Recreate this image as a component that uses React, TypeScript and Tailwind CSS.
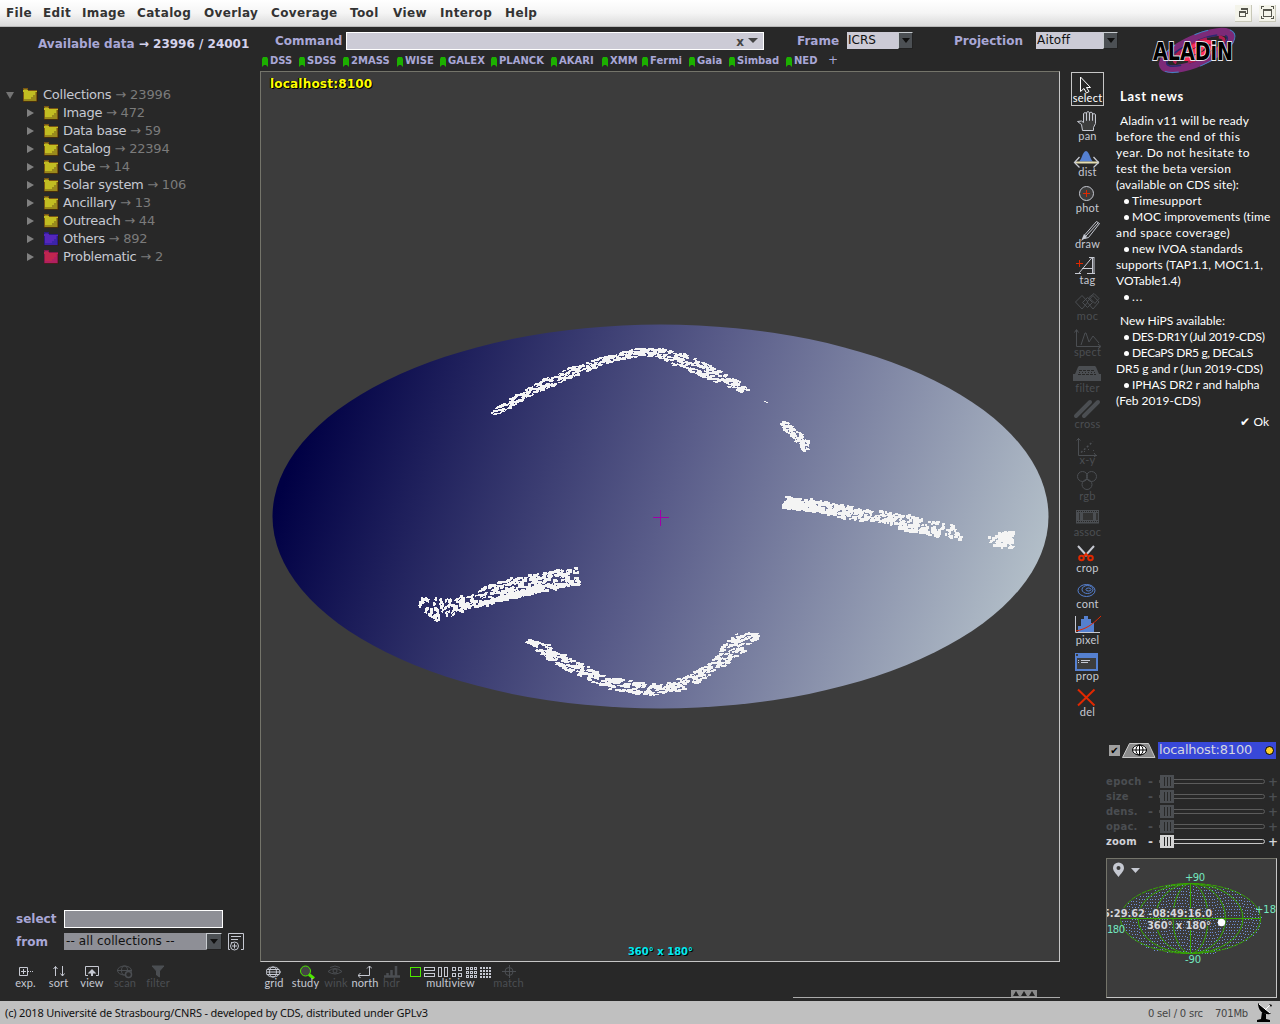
import React from "react";

type IconDef = { label: string; icon: React.ReactNode; off?: boolean };

const menus: [string, string][] = [
  ["File", "w-[37px]"], ["Edit", "w-[39px]"], ["Image", "w-[55px]"], ["Catalog", "w-[67px]"], ["Overlay", "w-[67px]"],
  ["Coverage", "w-[79px]"], ["Tool", "w-[43px]"], ["View", "w-[47px]"], ["Interop", "w-[65px]"], ["Help", "w-[40px]"],
];

const bookmarks: [string, string][] = [
  ["DSS", "w-[37px]"], ["SDSS", "w-[44px]"], ["2MASS", "w-[54px]"], ["WISE", "w-[43px]"], ["GALEX", "w-[51px]"],
  ["PLANCK", "w-[60px]"], ["AKARI", "w-[51px]"], ["XMM", "w-[40px]"], ["Fermi", "w-[47px]"], ["Gaia", "w-[40px]"],
  ["Simbad", "w-[57px]"], ["NED", "w-[42px]"],
];

const tree: [string, string, string][] = [
  ["Image", "472", "y"], ["Data base", "59", "y"], ["Catalog", "22394", "y"], ["Cube", "14", "y"],
  ["Solar system", "106", "y"], ["Ancillary", "13", "y"], ["Outreach", "44", "y"], ["Others", "892", "b"], ["Problematic", "2", "r"],
];

const folderColors: Record<string, [string, string, string]> = {
  y: ["#c2bd22", "#9a8a1c", "#7a5512"],
  b: ["#5526bb", "#3c24a8", "#2a1a86"],
  r: ["#c0264f", "#b02060", "#86184c"],
};

function Folder({ kind }: { kind: string }) {
  const [a, b, c] = folderColors[kind];
  return (
    <svg width="16" height="14" viewBox="0 0 16 14" shapeRendering="crispEdges">
      <path d="M1.500 .5h4v1.500h9v11h-13z" fill={b} stroke={c} />
      <path d="M1 2h5v1h9v1H1z" fill={a} />
      <path d="M2 4h11v3h-2v2H9v2H2z" fill={a} />
      <path d="M1 13.500h14.500V3" fill="none" stroke="#33200a" strokeOpacity=".7" />
    </svg>
  );
}

function random(seed: number) {
  let s = seed;
  return () => {
    s = (s * 1664525 + 1013904223) >>> 0;
    return s / 4294967296;
  };
}

/* Bands of sky cells: x, y, thickness and fill density at each node */
type BandNode = [number, number, number, number];
const bands: { nodes: BandNode[]; lean: number; cw: number; ch: number }[] = [
  { nodes: [[493, 414, 7, 1.2], [505, 407, 9, 0.9], [520, 398, 10, 0.85], [535, 390, 10, 1.2], [552, 381, 12, 1.1], [580, 369, 11, 1], [610, 359, 9, 0.9], [640, 352, 9, 1], [660, 353, 12, 1.1], [690, 363, 16, 0.95], [715, 375, 14, 0.85], [747, 391, 10, 1]], lean: 0.4, cw: 4.5, ch: 1.8 },
  { nodes: [[783, 423, 9, 0.9], [796, 435, 10, 1.1], [809, 449, 11, 1.1]], lean: 0.4, cw: 4, ch: 2.2 },
  { nodes: [[784, 502, 12, 2.8], [820, 507, 13, 2.3], [838, 511, 15, 1.4], [860, 515, 13, 1.1], [885, 517, 12, 1.1], [905, 522, 17, 1.3], [920, 527, 17, 1.2], [940, 530, 15, 0.6], [963, 533, 15, 0.55]], lean: 0.2, cw: 3, ch: 3 },
  { nodes: [[989, 541, 11, 0.8], [999, 540, 14, 1.1], [1003, 540, 16, 3], [1014, 540, 17, 3]], lean: 0.2, cw: 3.2, ch: 3.2 },
  { nodes: [[419, 602, 12, 0.5], [430, 607, 21, 0.6], [443, 611, 25, 0.55], [453, 604, 16, 0.4]], lean: 0.9, cw: 2.6, ch: 3.4 },
  { nodes: [[454, 608, 7, 1.7], [462, 604, 18, 1.3], [473, 603, 13, 1.1], [480, 599, 20, 0.6], [490, 595, 20, 0.95], [515, 588, 21, 1.2], [550, 581, 20, 1.1], [579, 576, 19, 0.9]], lean: 0.3, cw: 3.2, ch: 2.6 },
  { nodes: [[479, 605, 4, 1.4], [520, 594, 8, 2.2], [550, 587, 7, 2], [579, 584, 3, 1.5]], lean: 0.5, cw: 4, ch: 2 },
  { nodes: [[529, 641, 5, 0.9], [545, 650, 15, 1.3], [558, 658, 14, 0.95], [575, 667, 14, 1.05], [610, 683, 13, 1], [650, 690, 13, 1.1], [685, 684, 13, 0.9], [715, 666, 13, 0.9], [733, 650, 20, 1], [743, 640, 20, 1.1], [758, 636, 6, 0.9]], lean: 0.3, cw: 4.5, ch: 2.1 },
];

function skyCells() {
  const rnd = random(77);
  const out: string[] = [];
  for (const band of bands) {
    for (let i = 0; i + 1 < band.nodes.length; i++) {
      const [x0, y0, t0, d0] = band.nodes[i];
      const [x1, y1, t1, d1] = band.nodes[i + 1];
      const len = Math.hypot(x1 - x0, y1 - y0);
      const nx = -(y1 - y0) / len;
      const ny = (x1 - x0) / len;
      const area = len * ((t0 + t1) / 2);
      const n = Math.round((area * (d0 + d1) * 0.6) / (band.cw * band.ch));
      for (let k = 0; k < n; k++) {
        const u = rnd();
        const v = rnd() - 0.5;
        const t = t0 + (t1 - t0) * u - 1.5;
        const w = band.cw * (0.6 + rnd() * 0.7);
        const h = band.ch * (0.7 + rnd() * 0.5);
        const slope = ((y1 - y0) / len) * band.lean * w;
        const x = x0 + (x1 - x0) * u + nx * v * t - w / 2;
        const y = y0 + (y1 - y0) * u + ny * v * t - (h + slope) / 2;
        out.push(`M${x.toFixed(1)} ${y.toFixed(1)}l${w.toFixed(1)} ${slope.toFixed(1)}l-.6 ${h.toFixed(1)}l-${w.toFixed(1)} ${(-slope).toFixed(1)}z`);
      }
    }
  }
  return out.join("");
}
const cells = skyCells();

function SkyView() {
  return (
    <svg className="block" width="798" height="889" viewBox="261 72 798 889">
      <defs>
        <linearGradient id="sky" gradientUnits="userSpaceOnUse" x1="315" y1="398" x2="1006" y2="650">
          <stop offset="0" stopColor="#000044" />
          <stop offset="0.5" stopColor="#5a5d8a" />
          <stop offset="1" stopColor="#b2bec8" />
        </linearGradient>
      </defs>
      <ellipse cx="660.5" cy="516.5" rx="388" ry="192" fill="url(#sky)" />
      <path d={cells} fill="#f4f4f4" shapeRendering="crispEdges" />
      <path d="M764 401h2v1h2v1h-2v-1h-2z" fill="#f4f4f4" />
      <path d="M652.500 517.500h16M660.500 509.500v16" stroke="#a000a8" shapeRendering="crispEdges" />
    </svg>
  );
}

const L = "#c6c9d2";
const G = "#4b4e52";

const tools: IconDef[] = [
  { label: "select", icon: <path d="M10.500 5v14.500l3.500-3 2.500 4.500 2.500-1.500-2.500-4h4z" stroke="#fff" fill="none" /> },
  { label: "pan", icon: <path d="M12.500 22.500h11v-3l2-4v-9l-1.500-1-1.500 1v6V5l-1.500-1-1.500 1v7.500-8L18 3.500l-1.500 1v8-7L15 4.500l-1.500 1v9l-2-1.500-4 .5 4 3z" stroke={L} fill="#3d3d3d" /> },
  { label: "dist", icon: <><path d="M8.500 17.500c3 0 4-10.500 7.500-10.500s4.500 10.500 7.500 10.500z" fill="#5580d0" /><path d="M5 18.500h24" stroke="#e4dcae" strokeWidth="2" /><path d="M9.500 13l-5 5.500 5 5M23.500 13l5 5.500-5 5" fill="none" stroke={L} strokeWidth="1.300" /></> },
  { label: "phot", icon: <><circle cx="16.500" cy="13.500" r="7" fill="#3d3d3d" stroke={L} /><path d="M13 13.500h7M16.500 10v7" stroke="#e02800" /></> },
  { label: "draw", icon: <><path d="M26.500 5.500l3 2-11 14-4 1 .5-4z" fill="none" stroke={L} /><path d="M28 7L16 20" stroke={L} /><path d="M14 18l3 3-6 4z" fill={L} /></> },
  { label: "tag", icon: <><path d="M5 21.500h6M17 21.500h8M9 21L22.500 5v16M24 5v16M12 16.500h11M19 5.500h5" stroke={L} fill="none" /><path d="M6 11.500h7M9.500 8v7" stroke="#e02800" /></> },
  { label: "moc", off: true, icon: <path d="M12 7.500l6 6.500-6 7-6.500-7zM23 7.500l6 6.500-6 7-6-7zM17.500 9.500l5 5-5 5-5-5zM24 5.500l5 5-4 5-6-6z" fill="none" stroke={G} /> },
  { label: "spect", off: true, icon: <path d="M6.500 6v16.500H30M4.500 8.500l2-3 2 3M28 20l3 2.500-3 2M11 21l4-12h1l3 9 4-6 6 7" fill="none" stroke={G} /> },
  { label: "filter", off: true, icon: <><path d="M9 6h16l1 1 3 7h2v7H3v-7h2l3-7z" fill={G} /><path d="M9 10.500h16M8 14.500h18" stroke="#282828" strokeDasharray="3 1" /><path d="M9 12.500h16" stroke="#282828" strokeDasharray="1 2" /></> },
  { label: "cross", off: true, icon: <path d="M6 20L20 6M14 20L28 6" stroke={G} strokeWidth="4" strokeLinecap="round" /> },
  { label: "x-y", off: true, icon: <><path d="M8.500 6v17.500H27M6.500 8.500l2-2 2 2M24 21l2 2.500-2 1.500" fill="none" stroke={G} /><path d="M11 20.500l12-11" stroke={G} strokeWidth="1.500" strokeDasharray="2 2" /><path d="M23 18.500h1M14 19.500h1M18 17.500h1" stroke={G} /></> },
  { label: "rgb", off: true, icon: <g fill="none" stroke={G}><circle cx="12.500" cy="8.500" r="5" /><circle cx="21.500" cy="8.500" r="5" /><circle cx="17" cy="16.500" r="5" /></g> },
  { label: "assoc", off: true, icon: <><path d="M6 6h23v13.500H6z" fill={G} /><path d="M7 7.500h22M7 17.500h22" stroke="#282828" strokeDasharray="1 1" /><path d="M9 9h1v7H9zM13 9h10v7H13zM26 9h2v7h-2z" fill="#333" /></> },
  { label: "crop", icon: <><path d="M8 6l9 10M24 6l-9 10" stroke={L} strokeWidth="2" /><g fill="none" stroke="#e02800" strokeWidth="2"><circle cx="11.500" cy="18" r="2.300" /><circle cx="20.500" cy="18" r="2.300" /><path d="M14 16l2-2 2 2" /></g></> },
  { label: "cont", icon: <g fill="none" stroke="#5580d0"><ellipse cx="16.500" cy="14.500" rx="8.500" ry="6" /><ellipse cx="17.500" cy="13.500" rx="5.500" ry="4" /><ellipse cx="18.500" cy="13.500" rx="2.500" ry="1.500" /></g> },
  { label: "pixel", icon: <><path d="M8 20v-6h3V7h3V4h4v3h3v4h3v9z" fill="#5580d0" /><path d="M5.500 4v16.500H30" fill="none" stroke={L} /><path d="M6 19c10-2 16-6 25-15" fill="none" stroke="#e02800" /></> },
  { label: "prop", icon: <><path d="M5 5h23v18H5z" fill="#5580d0" /><path d="M7 10h19v11H7zM6 6h2v2H6z" fill="#3d3d3d" /><path d="M8 12.500h1M11 12.500h9M8 14.500h1M11 14.500h7" stroke={L} /></> },
  { label: "del", icon: <path d="M8 5.500l16.500 16M24.500 5.500L8 21.500" stroke="#e02800" strokeWidth="2" /> },
];

const newsA: [string, string][] = [
  ["Aladin v11 will be ready", "tracking-[0.15px]"], ["before the end of this", "tracking-[0.5px]"], ["year. Do not hesitate to", "tracking-[0.42px]"],
  ["test the beta version", "tracking-[0.35px]"], ["(available on CDS site):", "tracking-[0.15px]"], ["• Timesupport", "tracking-[0.25px]"],
  ["• MOC improvements (time", "tracking-[0.1px]"], ["and space coverage)", "tracking-[0.45px]"], ["• new IVOA standards", "tracking-[0.18px]"],
  ["supports (TAP1.1, MOC1.1,", "tracking-[0.1px]"], ["VOTable1.4)", "tracking-[0px]"], ["• ...", "tracking-[0.9px]"],
];
const newsB: [string, string][] = [
  ["New HiPS available:", "tracking-[0.02px]"], ["• DES-DR1Y (Jul 2019-CDS)", "tracking-[-0.35px]"], ["• DECaPS DR5 g, DECaLS", "tracking-[-0.34px]"],
  ["DR5 g and r (Jun 2019-CDS)", "tracking-[-0.1px]"], ["• IPHAS DR2 r and halpha", "tracking-[-0.05px]"], ["(Feb 2019-CDS)", "tracking-[0px]"],
];

function News({ lines }: { lines: [string, string][] }) {
  return (
    <>
      {lines.map(([l, spacing], i) => (
        <p key={l} className={`${spacing} ${l.startsWith("•") ? "pl-2" : i === 0 ? "pl-1" : ""}`}>
          {l.startsWith("•") ? <><span className="mr-[3px] inline-block size-[5px] rounded-full bg-white align-[1px]" />{l.slice(2)}</> : l}
        </p>
      ))}
    </>
  );
}

function Logo() {
  return (
    <svg className="overflow-visible" width="86" height="42" viewBox="0 0 86 42">
      <g fill="none" transform="rotate(-24 45 20.500)">
        <ellipse cx="45" cy="20.500" rx="37" ry="12" stroke="#7c2a78" strokeWidth="8" />
        <ellipse cx="45" cy="20.500" rx="41" ry="15.500" stroke="#3d88c4" strokeWidth="1" strokeDasharray="14 22" />
        <ellipse cx="45" cy="20.500" rx="33" ry="9" stroke="#2a2a70" strokeWidth="1.500" strokeDasharray="20 8" />
        <ellipse cx="47" cy="21" rx="27" ry="8" stroke="#b01c50" strokeWidth="3" strokeDasharray="44 12" />
        <ellipse cx="45" cy="20.500" rx="17" ry="5.500" stroke="#ff2c58" strokeWidth="4" />
        <ellipse cx="45" cy="20.500" rx="8" ry="3" fill="#ff3858" />
      </g>
      <text x="1" y="30" textLength="80" lengthAdjust="spacingAndGlyphs" fontFamily="DejaVu Sans" fontWeight="700" fontSize="24" fill="#000" stroke="#e8e8ee" strokeWidth="1.800" paintOrder="stroke">ALADiN</text>
    </svg>
  );
}

function Drop({ small }: { small?: boolean }) {
  return (
    <span className={`flex ${small ? "w-4" : "w-[15px]"} h-full items-center justify-center border border-t-[#c8ccd0] border-l-[#c8ccd0] border-r-[#222] border-b-[#222] bg-[#4c5054]`}>
      <span className="border-x-[4px] border-t-[5px] border-x-transparent border-t-[#111]" />
    </span>
  );
}

const sliders = ["epoch", "size", "dens.", "opac.", "zoom"];

function miniGrid() {
  const pts: string[] = [];
  for (let j = -11; j <= 11; j++) {
    const y = j * 3;
    const half = 70 * Math.sqrt(1 - (y / 35.5) ** 2);
    const off = ((j + 12) % 3) * 0.8;
    for (let x = -half + off; x < half; x += 2.7) pts.push(`M${Math.round(84 + x)} ${Math.round(60 + y + Math.sin(x / 9) * 1.1)}h1v1h-1z`);
  }
  return pts.join("");
}
const dots = miniGrid();

function MiniMap() {
  return (
    <svg className="block" width="169" height="138" viewBox="0 0 169 138">
      <path d={dots} fill="#6f8fd8" shapeRendering="crispEdges" />
      <g fill="none" stroke="#36a800">
        <ellipse cx="83.500" cy="59.500" rx="70" ry="35" strokeDasharray="5 1" />
        <ellipse cx="83.500" cy="59.500" rx="52.500" ry="35" />
        <ellipse cx="83.500" cy="59.500" rx="35" ry="35" />
        <ellipse cx="83.500" cy="59.500" rx="17.500" ry="35" />
        <path d="M13.500 59.500h140M83.500 24.500v70" />
      </g>
      <path fillRule="evenodd" d="M6 9a5.500 5.500 0 0 1 11 0c0 3-3 5.500-5.500 9C9 14.500 6 12 6 9zm3.500 0a2 2 0 1 0 4 0a2 2 0 1 0-4 0z" fill="#c6c9d2" />
      <path d="M24 9h9l-4.500 5z" fill="#c6c9d2" />
      <g fontFamily="DejaVu Sans" fontSize="10" fill="#74e8c0">
        <text x="78" y="22" textLength="20">+90</text>
        <text x="78" y="104" textLength="16">-90</text>
        <text x="148" y="54" textLength="21">+18</text>
        <text x="0" y="74" textLength="18">180</text>
      </g>
      <g fontFamily="DejaVu Sans" fontSize="10" fontWeight="700" fill="#d4d6dc" stroke="#3c3c3c" strokeWidth="2" paintOrder="stroke">
        <text x="-4" y="58" textLength="109" lengthAdjust="spacingAndGlyphs">5:29.62 -08:49:16.0</text>
        <text x="40" y="70" textLength="64">360° x 180°</text>
      </g>
      <circle cx="114.500" cy="63.500" r="3.700" fill="#fff" />
    </svg>
  );
}

function Btn({ label, off, cls, children, w }: { label: string; off?: boolean; cls: string; children: React.ReactNode; w: number }) {
  return (
    <div className={`flex flex-col items-center ${cls} ${off ? "text-[#4b4e52]" : "text-[#c6c9d2]"}`}>
      <svg className="shrink-0" width={w} height="14" viewBox={`0 0 ${w} 14`} fill="none" stroke="currentColor">{children}</svg>
      <span className="-mt-[3px] font-['Lato'] text-[11px] leading-[13px] tracking-[0.15px] whitespace-nowrap">{label}</span>
    </div>
  );
}

export default function App() {
  return (
    <div className="flex h-[1024px] w-[1280px] flex-col overflow-hidden bg-[#282828] font-['DejaVu_Sans',sans-serif] text-[12px] text-[#c6c9d2]">
      <header className="flex h-[27px] shrink-0 items-center border-b border-[#b8b8b8] bg-linear-to-b from-white via-[#f5f5f5] to-[#dadada] pl-[6px] font-bold tracking-[0.35px] text-[#333]">
        {menus.map(([m, w]) => (
          <span key={m} className={`${w} shrink-0 leading-[25px] whitespace-nowrap`}>{m}</span>
        ))}
        <div className="mr-1 ml-auto flex gap-[7px]">
          <span className="flex size-[17px] items-center justify-center border-r border-b border-[#c8c8b8] bg-[#f4f4ea]">
            <svg width="11" height="11" fill="none" stroke="#55554c" shapeRendering="crispEdges"><path d="M3.500 3V1.500h6v5H8M1.500 4.500h6v5h-6zM1 5.500h7M3 2.500h7" /></svg>
          </span>
          <span className="flex size-[17px] items-center justify-center border-r border-b border-[#c8c8b8] bg-[#f4f4ea]">
            <svg width="13" height="13" fill="none" stroke="#55554c" shapeRendering="crispEdges"><path d="M2.500 3.500h8v7h-8zM2 4.500h9M.5 3V.5H3M10 .5h2.500V3M.5 10v2.500H3M10 12.500h2.500V10" /></svg>
          </span>
        </div>
      </header>

      <div className="flex h-[974px] shrink-0">
        <aside className="flex w-[260px] shrink-0 flex-col">
          <h1 className="mt-2 pl-[38px] font-bold whitespace-nowrap text-[#a9a7d6]">
            <span className="leading-[18px]">Available data <span className="text-[#d5d3ec]">→ 23996 / 24001</span></span>
          </h1>
          <div className="mt-[33px] text-[13px] tracking-[-0.32px]">
            <div className="flex h-[18px] items-center pl-[6px]">
              <span className="mr-2 border-x-[4.5px] border-t-[7px] border-x-transparent border-t-[#747474]" />
              <Folder kind="y" />
              <span className="ml-[5px] leading-[18px] tracking-[-0.25px] whitespace-nowrap">Collections <span className="tracking-[-0.1px] text-[#7b7b7b]">→ 23996</span></span>
            </div>
            {tree.map(([n, c, k]) => (
              <div key={n} className="flex h-[18px] items-center pl-[27px]">
                <span className="mr-[9px] border-y-[4px] border-l-[7px] border-y-transparent border-l-[#808080]" />
                <Folder kind={k} />
                <span className="ml-1 leading-[18px] whitespace-nowrap">{n} <span className="tracking-[-0.2px] text-[#7b7b7b]">→ {c}</span></span>
              </div>
            ))}
          </div>
          <div className="mt-auto mb-3">
            <div className="flex h-[18px] items-center pl-4 font-bold text-[#a9a7d6]">
              <span className="w-12">select</span>
              <span className="h-[18px] w-[159px] border border-white bg-[#8e8f96]" />
            </div>
            <div className="mt-1 flex h-[19px] items-center pl-4">
              <span className="w-12 font-bold text-[#a9a7d6]">from</span>
              <span className="flex h-[17px] w-[158px] bg-[#8e8f96]">
                <span className="w-[142px] pl-[2px] leading-[17px] tracking-[0.1px] whitespace-nowrap text-[#111]">-- all collections --</span>
                <Drop small />
              </span>
              <svg className="ml-1.5" width="17" height="19" viewBox="0 0 17 19" fill="none" stroke="#c6c9d2"><path d="M13 17.500h2.500V1.500H.5v16H2M3 4.500h10M3 7.500h7M3 10.500h4" /><circle cx="6.500" cy="14" r="4" fill="#282828" /><path d="M4 14h5M6.500 11.500v5" /></svg>
            </div>
            <div className="mt-3 flex h-[26px] pt-[2px]">
              <Btn label="exp." cls="ml-[9px] w-[33px]" w={16}><path d="M1.500 2.500h8v8h-8zM3 6.500h5M5.500 4v5" /><path d="M10 6.500h5" strokeDasharray="1 1" /></Btn>
              <Btn label="sort" cls="w-[33px]" w={14}><path d="M3.500 11V1.500M1.500 4L3.500 1.500 5.500 4M10.500 1v10M8.500 8.500l2 2.500 2-2.500" /></Btn>
              <Btn label="view" cls="w-[34px]" w={16}><path d="M4 10.500H1.500v-9h13v9H12" /><path d="M8 11V6M6 7.500l2-2 2 2z" fill="currentColor" strokeWidth="2" /></Btn>
              <Btn label="scan" off cls="w-8" w={16}><ellipse cx="7.500" cy="5.500" rx="7" ry="4.500" /><ellipse cx="7.500" cy="5.500" rx="3" ry="4.500" /><path d="M0 5.500h15" /><circle cx="11.500" cy="9.500" r="3" fill="#282828" strokeWidth="1.500" /></Btn>
              <Btn label="filter" off cls="w-[34px]" w={14}><path d="M1 1h12L8.500 6v6l-3-2V6z" fill="currentColor" /></Btn>
            </div>
          </div>
        </aside>

        <div className="flex w-[1020px] flex-col">
          <div className="flex h-[44px] shrink-0">
            <div className="flex w-[892px] shrink-0 flex-col">
              <div className="mt-1 flex h-[19px] items-center font-bold text-[#a9a7d6]">
                <span className="w-[86px] pl-[15px]">Command</span>
                <span className="flex h-[18px] w-[418px] items-center border border-white bg-[#cccbd6] pr-[5px] text-[#444]">
                  <span className="mt-[2px] mr-1 ml-auto leading-[14px]">x</span>
                  <span className="border-x-[5px] border-t-[5px] border-x-transparent border-t-[#444]" />
                </span>
                <span className="w-[83px] pl-[33px]">Frame</span>
                <span className="flex h-[17px] w-[66px] bg-[#cccbd6] font-normal text-[#111]">
                  <span className="w-[51px] pl-px leading-[17px]">ICRS</span>
                  <Drop />
                </span>
                <span className="w-[123px] pl-[41px]">Projection</span>
                <span className="flex h-[17px] w-[82px] bg-[#cccbd6] font-normal text-[#111]">
                  <span className="w-[67px] pl-px leading-[17px] tracking-[0.2px]">Aitoff</span>
                  <Drop />
                </span>
              </div>
              <div className="mt-[3px] flex h-[14px] items-center pl-[2px] text-[10px] font-bold text-[#a9a7d6]">
                {bookmarks.map(([b, w]) => (
                  <span key={b} className={`flex shrink-0 items-center ${w}`}>
                    <svg className="mt-[3px] mr-[2px] shrink-0" width="6" height="10"><path d="M0 2l1-2h4l1 2v8L4 8H2L0 10z" fill="#1cb000" /></svg>
                    <span className="whitespace-nowrap">{b}</span>
                  </span>
                ))}
                <span className="text-xs font-normal">+</span>
              </div>
            </div>
            <div className="-mt-[1px] pt-[4px]"><Logo /></div>
          </div>

          <div className="flex h-[930px]">
            <main className="flex w-[800px] shrink-0 flex-col">
              <div className="relative h-[891px] shrink-0 border border-t-[#74746a] border-r-[#c6c6c6] border-b-[#c6c6c6] border-l-[#74746a] bg-[#3c3c3c] text-[12px] font-bold">
                <SkyView />
                <span className="absolute top-[3px] left-[9px] tracking-[0.2px] text-[#ffff00] [text-shadow:1px_1px_0_#000,-1px_0_0_#000]">localhost:8100</span>
                <span className="absolute inset-x-0 bottom-[2px] pl-px text-center text-[10px] text-[#00e8f0] [text-shadow:1px_1px_0_#000]">360° x 180°</span>
              </div>
              <div className="flex pt-[3px]">
                <Btn label="grid" cls="w-7" w={16}><ellipse cx="7" cy="7" rx="7" ry="5" /><ellipse cx="7" cy="7" rx="3.500" ry="5" /><path d="M0 7h15M1 4.500h12M1 9.500h12" /></Btn>
                <Btn label="study" cls="w-[35px]" w={18}><circle cx="8.500" cy="6" r="5" stroke="#4de800" fill="#444" /><path d="M12 9.500l5 4" stroke="#4de800" strokeWidth="3" /></Btn>
                <Btn label="wink" off cls="w-[26px]" w={16}><path d="M0 6.500q7-6 14 0q-7 5-14 0zM2 2.500q5-3 10 0" /><circle cx="7" cy="6" r="2" /></Btn>
                <Btn label="north" cls="w-8" w={14}><path d="M11.500 1v9.500H0M9 3.500l2.500-2.500L14 3.500M2.500 8L0 10.500 2.500 13" /></Btn>
                <Btn label="hdr" off cls="w-[21px]" w={16}><path d="M0 11.500h16M3.500 11V8M7.500 11V5M12 11V1" strokeWidth="2.500" /></Btn>
                <Btn label="multiview" cls="ml-[7px] w-[83px]" w={83}>
                  <g shapeRendering="crispEdges">
                    <path d="M1.500 2.500h10v9h-10z" stroke="#4de800" />
                    <path d="M15.500 2.500h10v3h-10zM15.500 8.500h10v3h-10zM29.500 2.500h3v9h-3zM35.500 2.500h3v9h-3zM43.500 2.500h3v3h-3zM49.500 2.500h3v3h-3zM43.500 8.500h3v3h-3zM49.500 8.500h3v3h-3z" />
                    <path d="M57 3.500h12M57 7.500h12M57 11.500h12" strokeWidth="3" strokeDasharray="3 1" />
                    <path d="M58 3.500h10M58 7.500h10M58 11.500h10" stroke="#282828" strokeDasharray="1 3" />
                    <path d="M71 3h12M71 6h12M71 9h12M71 12h12" strokeWidth="2" strokeDasharray="2 1" />
                  </g>
                </Btn>
                <Btn label="match" off cls="ml-[1px] w-[31px]" w={14}><circle cx="7" cy="6.500" r="4" /><path d="M7.500 0v13M0 6.500h14" /></Btn>
              </div>
              <div className="mt-auto mb-[3px] ml-[533px] flex h-[8px] w-[267px] items-end border-b border-[#aaa]">
                <span className="ml-[218px] flex h-[7px] w-[26px] items-center justify-center gap-[2px] bg-[#8a8a8a]">
                  {[0, 1, 2].map((k) => <span key={k} className="border-x-[3px] border-b-[5px] border-x-transparent border-b-[#222]" />)}
                </span>
              </div>
            </main>

            <nav className="ml-[11px] flex w-[33px] shrink-0 flex-col pt-px">
              {tools.map((t) => (
                <div key={t.label} className={`h-9 shrink-0 ${t.off ? "text-[#4b4e52]" : "text-[#c6c9d2]"}`}>
                  <div className={t.label === "select" ? "h-[34px] text-white outline outline-[#c6c6c6] -outline-offset-1" : "h-9"}>
                    <svg className="-ml-px block overflow-visible" width="34" height="22" viewBox="0 0 34 22">{t.icon}</svg>
                    <div className={`text-center font-['Lato'] text-[11px] leading-[13px] tracking-[0.25px] ${t.label === "select" ? "-mt-[3px]" : "-mt-px"}`}>{t.label}</div>
                  </div>
                </div>
              ))}
            </nav>

            <aside className="ml-[2px] flex w-[174px] shrink-0 flex-col">
              <div className="h-[668px] pl-[10px] font-['Lato'] text-[12px] leading-4 whitespace-nowrap text-white">
                <h2 className="mt-[17px] mb-[9px] pl-1 text-[13px] font-bold tracking-[0.75px]">Last news</h2>
                <News lines={newsA} />
                <div className="h-2" />
                <News lines={newsB} />
                <p className="mt-[5px] pr-[11px] text-right">✔ Ok</p>
              </div>
              <div className="flex h-[22px] items-center">
                <span className="ml-[3px] flex size-[11px] items-center justify-center bg-[#a0a0a0] text-[10px] font-bold text-black">✔</span>
                <svg className="ml-[2px]" width="34" height="15" viewBox="0 0 34 15"><path d="M7.500.5h19l6.500 14H.5z" fill="#8c8c8c" stroke="#c6c6c6" /><ellipse cx="17.500" cy="7" rx="7" ry="5" fill="#fff" stroke="#000" /><path d="M11 7h14M17.500 2v10" stroke="#000" fill="none" /><ellipse cx="17.500" cy="7" rx="3.500" ry="5" fill="none" stroke="#000" /></svg>
                <span className="ml-[2px] flex h-[17px] w-[118px] items-center bg-[#3848d8] pl-px text-[13px] tracking-[-0.2px] text-[#d4d6e0]">localhost:8100<span className="mr-[2px] ml-auto size-[9px] rounded-full border border-black bg-[#ffd028]" /></span>
              </div>
              <div className="mt-[13px]">
                {sliders.map((s) => {
                  const on = s === "zoom";
                  return (
                    <div key={s} className={`flex h-[15px] items-center text-[10px] font-bold ${on ? "text-[#d0d2d8]" : "text-[#4b4e52]"}`}>
                      <span className={`w-[42px] ${s === "epoch" ? "tracking-[0.4px]" : "tracking-[0.2px]"}`}>{s}</span>
                      <span className="w-[11px] text-[12px]">-</span>
                      <span className={`flex h-[5px] w-[106px] items-center rounded-full border-[1.5px] ${on ? "border-[#c6c6c6]" : "border-[#5c5c5c]"}`}>
                        <span className={`flex h-[13px] w-[14px] shrink-0 items-center justify-center gap-[2px] ${on ? "bg-[#d4d4d4]" : "bg-[#4b4e52]"}`}>
                          {[0, 1, 2].map((k) => <span key={k} className="h-[9px] w-px bg-[#282828]" />)}
                        </span>
                      </span>
                      <span className="ml-[3px] text-[12px]">+</span>
                    </div>
                  );
                })}
              </div>
              <div className="mt-[9px] h-[140px] w-[171px] border border-t-[#74746a] border-r-[#c6c6c6] border-b-[#c6c6c6] border-l-[#74746a] bg-[#3c3c3c]">
                <MiniMap />
              </div>
            </aside>
          </div>
        </div>
      </div>

      <footer className="flex h-[23px] shrink-0 items-center bg-[#c0c0c0] pt-[2px] pl-[5px] text-[10px] text-[#111]">
        <span className="font-['Noto_Sans'] text-[11px] tracking-[-0.17px]">(c) 2018 Université de Strasbourg/CNRS - developed by CDS, distributed under GPLv3</span>
        <span className="ml-auto tracking-[-0.2px] text-[#444]">0 sel / 0 src</span>
        <span className="ml-3 tracking-[-0.2px] text-[#444]">701Mb</span>
        <svg className="-mt-[2px] mr-2 ml-[9px]" width="15" height="21" viewBox="0 0 15 21"><path d="M1 1c0 8 5 12 13 11z" fill="#000" /><path d="M2 2l11 9M13 3L8 8" stroke="#fff" /><path d="M12 2l3 1-1 2zM5 10l4 2v5l4 1v2H0v-2l4-1z" fill="#000" /></svg>
      </footer>
    </div>
  );
}
